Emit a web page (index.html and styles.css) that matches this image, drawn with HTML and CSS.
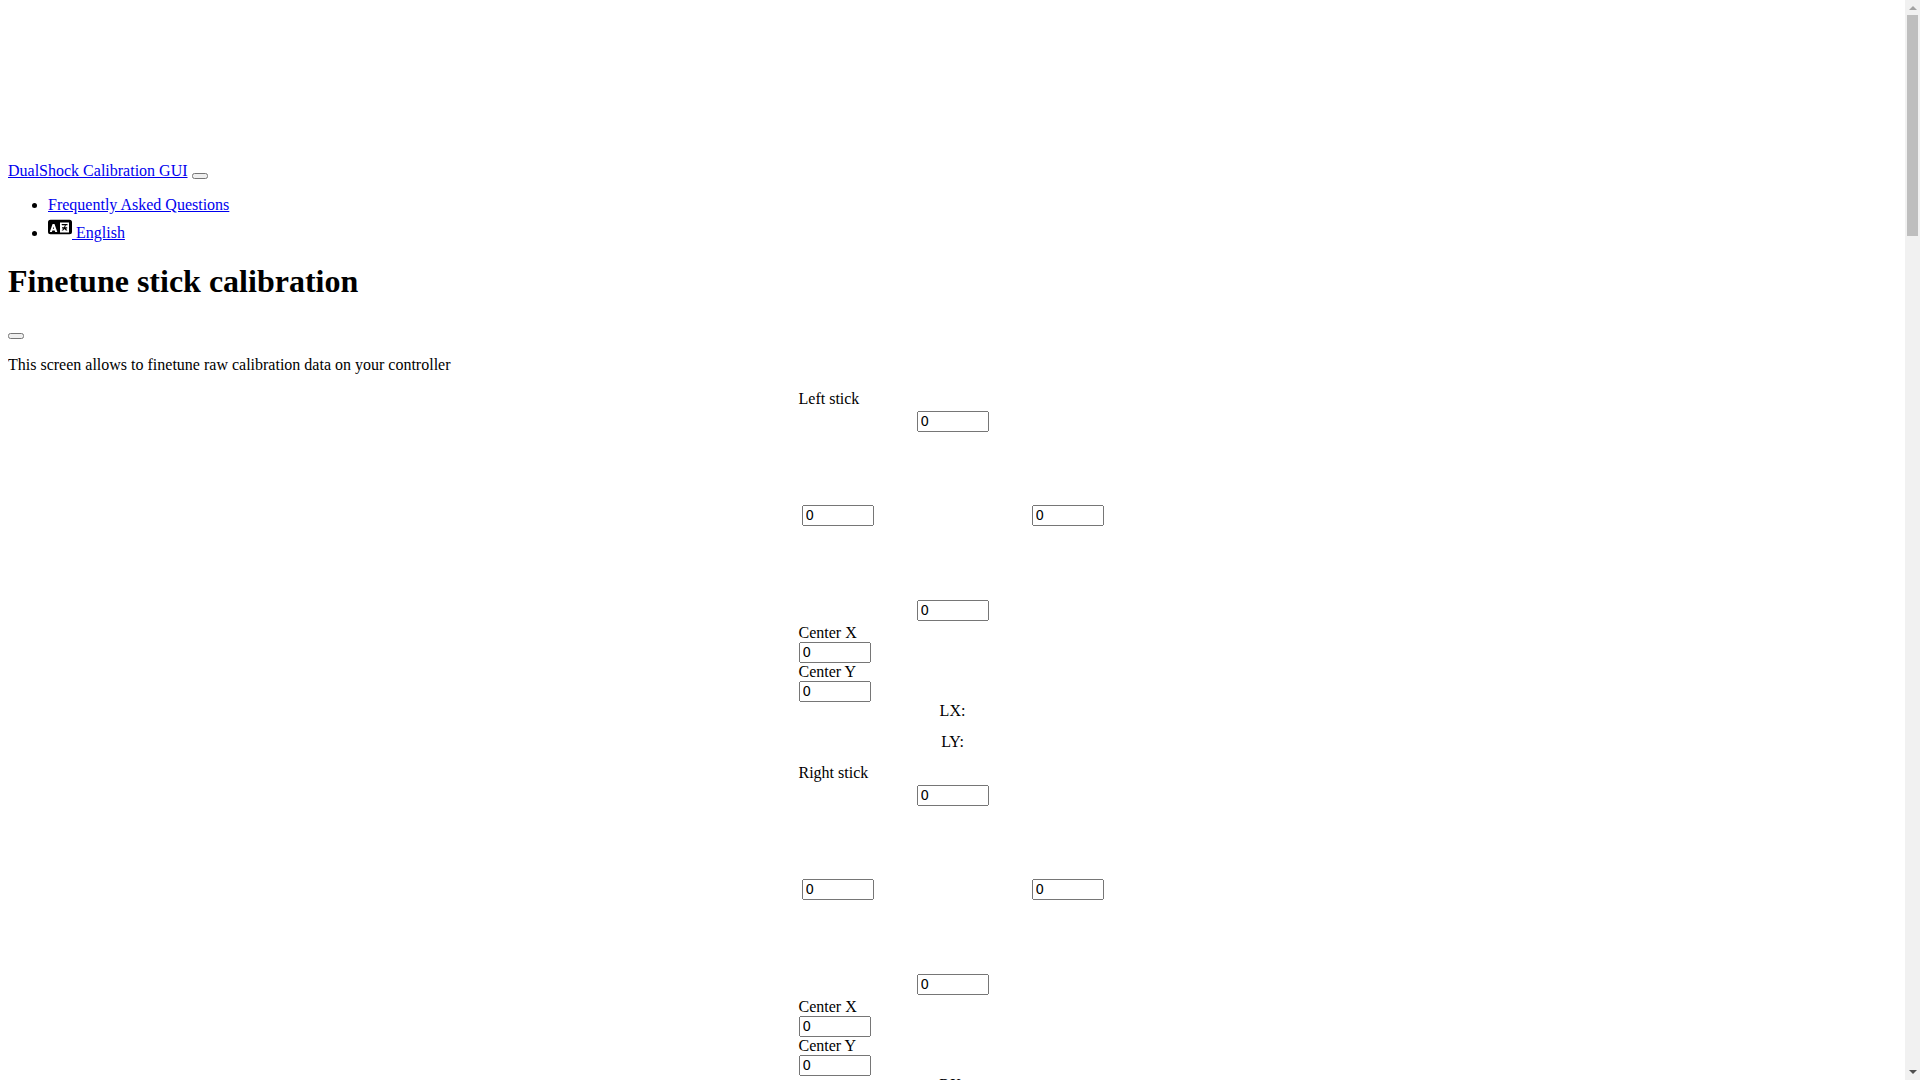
FILE: index.html
```html
<!DOCTYPE HTML>
<html lang="en-US">
<head>
	<meta charset="UTF-8">
	<title>DualShock Calibration GUI</title>
	<link rel="stylesheet" href="styles.css">
</head>
<body>
<nav class="topnav">
	<div class="logo-space"></div>
	<a href="#">DualShock Calibration GUI</a>
	<button type="button"></button>
	<ul>
		<li><a href="#">Frequently Asked Questions</a></li>
		<li><a href="#"><svg class="lang-icon" viewBox="0 0 24 24" width="24" height="24"><path fill="#000" fill-rule="evenodd" d="M2.500 5.800h19a2.500 2.500 0 0 1 2.500 2.500v9.400a2.500 2.500 0 0 1-2.500 2.500h-19A2.500 2.500 0 0 1 0 17.700V8.300a2.500 2.500 0 0 1 2.500-2.500zM12 8.500V18.500h9V8.500zM4.600 10L1.800 18h2.100l.5-1.500h2.300l.5 1.500h2.100L6.500 10zM4.900 14.800l.6-2.100.6 2.100z"/><path fill="#000" d="M13.500 10h6v1.300h-1.600l-.9 1.900h2.200v1.200h-1.400l1.700 2.100h-1.700L16.500 15l-1.400 1.500h-1.500l1.900-2.100h-1.500v-1.200h2l.9-1.900h-2.900z"/></svg> English</a></li>
	</ul>
</nav>
<h1>Finetune stick calibration</h1>
<button type="button"></button>
<p>This screen allows to finetune raw calibration data on your controller</p>
<div class="sticks">
	<div class="stick">
		<div>Left stick</div>
		<table>
			<tr><td></td><td><input class="num" type="text" value="0"></td><td></td></tr>
			<tr><td><input class="num" type="text" value="0"></td><td><div class="pad"></div></td><td><input class="num" type="text" value="0"></td></tr>
			<tr><td></td><td><input class="num" type="text" value="0"></td><td></td></tr>
		</table>
		<label>Center X</label>
		<input class="num" type="text" value="0">
		<label>Center Y</label>
		<input class="num" type="text" value="0">
		<div class="readout">LX:</div>
		<div class="readout">LY:</div>
	</div>
	<div class="stick">
		<div>Right stick</div>
		<table>
			<tr><td></td><td><input class="num" type="text" value="0"></td><td></td></tr>
			<tr><td><input class="num" type="text" value="0"></td><td><div class="pad"></div></td><td><input class="num" type="text" value="0"></td></tr>
			<tr><td></td><td><input class="num" type="text" value="0"></td><td></td></tr>
		</table>
		<label>Center X</label>
		<input class="num" type="text" value="0">
		<label>Center Y</label>
		<input class="num" type="text" value="0">
		<div class="readout">RX:</div>
		<div class="readout">RY:</div>
	</div>
</div>
<aside class="scrollbar">
	<span class="arrow arrow-up"></span>
	<span class="thumb"></span>
	<span class="arrow arrow-down"></span>
</aside>
</body>
</html>
```

FILE: styles.css
```css
/* Page */
html {
    font-family: "Liberation Serif", serif;
}
body {
    margin-right: 23px; /* room for the scrollbar */
}
h1 {
    font-size: 32px;
}
a:link {
    color: #00e;
}

/* Top nav */
.logo-space {
    height: 154px;
}
.lang-icon {
    vertical-align: baseline;
}

/* Sticks */
.sticks {
    display: flex;
    flex-direction: column;
    align-items: center;
}
.stick {
    width: 308px;
}
.stick label {
    display: block;
}
.num {
    display: block;
    box-sizing: border-box;
    width: 72px;
    height: 21px;
    font: 13.33px "DejaVu Sans", sans-serif;
}
.stick table {
    border-spacing: 2px;
}
.stick td {
    padding: 1px;
}
.pad {
    width: 150px;
    height: 160px;
}
.stick td .num {
    margin: 0 auto;
}
.readout {
    margin-bottom: 13px;
    text-align: center;
}

/* Scrollbar */
.scrollbar {
    position: fixed;
    top: 0;
    right: 0;
    bottom: 0;
    width: 15px;
    display: flex;
    flex-direction: column;
    align-items: center;
    background: #f1f1f1;
}
.arrow {
    width: 0;
    height: 0;
    border-left: 4px solid transparent;
    border-right: 4px solid transparent;
}
.arrow-up {
    margin-top: 6px;
    border-bottom: 4px solid #a3a3a3;
}
.arrow-down {
    margin-top: auto;
    margin-bottom: 6px;
    border-top: 4px solid #505050;
}
.thumb {
    width: 11px;
    height: 221px;
    margin-top: 5px;
    background: #bebebe;
}
```
